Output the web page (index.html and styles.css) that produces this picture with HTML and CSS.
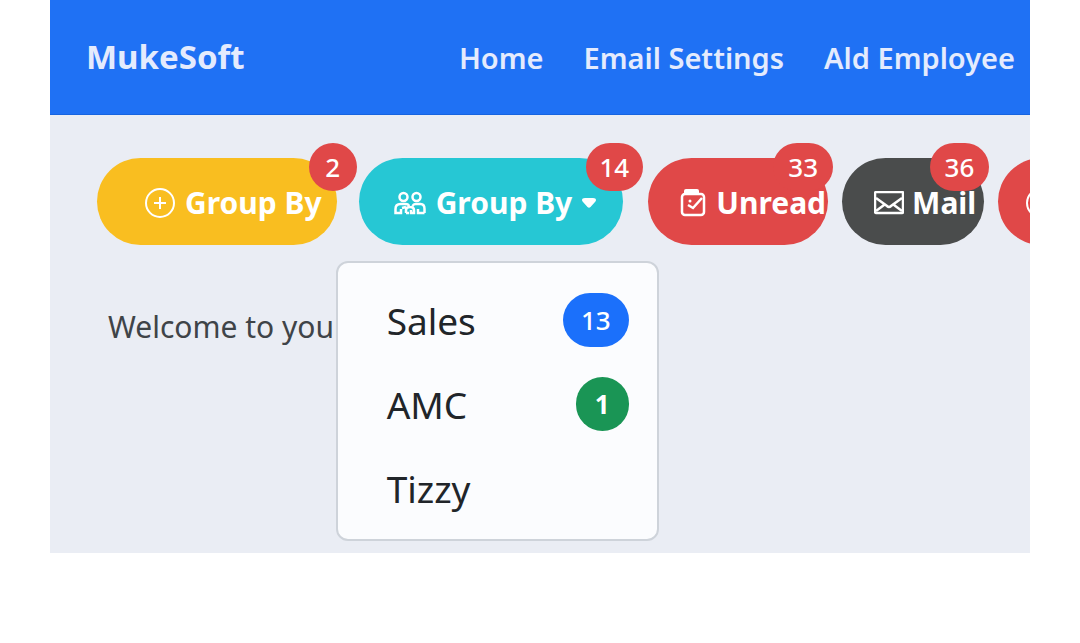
FILE: index.html
```html
<!DOCTYPE html>
<html lang="en">
<head>
    <meta charset="utf-8">
    <meta name="viewport" content="width=device-width, initial-scale=1">
    <title>MukeSoft</title>
    <link rel="stylesheet" href="styles.css">
</head>
<body>
    <div class="page">
        <header class="navbar">
            <a class="brand" href="#">MukeSoft</a>
            <nav class="nav-links">
                <a href="#">Home</a>
                <a href="#">Email Settings</a>
                <a href="#">Ald Employee</a>
            </nav>
        </header>

        <main class="content">
            <div class="toolbar">
                <div class="btn-set">
                    <button type="button" class="btn btn-warning">
                        <svg class="icon" width="30" height="30" viewBox="0 0 30 30">
                            <circle cx="15" cy="15" r="14"/>
                            <path d="M15 9v12M9 15h12"/>
                        </svg>
                        Group By
                        <span class="count">2</span>
                    </button>

                    <div class="dropdown">
                        <button type="button" class="btn btn-info" aria-haspopup="true" aria-expanded="true">
                            <svg class="icon icon-bold" width="32" height="24" viewBox="0 0 32 24">
                                <circle cx="9.500" cy="6" r="4"/>
                                <circle cx="22.500" cy="6" r="4"/>
                                <path d="M7 22H1.500v-4q0-5 5-5h5q3 0 3.500 2M2 22h5v-4M12 22v-3q0-3 4-3t4 3v3h-3v-3M8 17l4-1M12 22h3M30.500 22v-4q0-5-4-5h-5q-2 0-3 2M30.500 22H24v-4"/>
                            </svg>
                            Group By
                            <svg class="caret" width="14" height="10" viewBox="0 0 14 10">
                                <path d="M3 0h8q3 0 3 2 0 1-1 2L8.500 9q-1.500 1.500-3 0L1 4Q0 3 0 2 0 0 3 0z"/>
                            </svg>
                            <span class="count">14</span>
                        </button>
                        <!-- dropdown list -->
                        <ul class="menu">
                            <li><a href="#">Sales <span class="pill pill-blue">13</span></a></li>
                            <li><a href="#">AMC <span class="pill pill-green">1</span></a></li>
                            <li><a href="#">Tizzy</a></li>
                        </ul>
                    </div>
                </div>

                <div class="btn-set btn-set-tight">
                    <button type="button" class="btn btn-danger">
                        <svg class="icon icon-bold" width="26" height="28" viewBox="0 0 26 28">
                            <rect x="2" y="5" width="22" height="21" rx="3"/>
                            <path class="solid" d="M6 0h11q2 0 2 2v4H4V2q0-2 2-2z"/>
                            <path d="M8 16l5 3 9-10"/>
                            <circle class="solid" cx="10" cy="12" r="1.500"/>
                        </svg>
                        Unread
                        <span class="count">33</span>
                    </button>
                    <button type="button" class="btn btn-dark">
                        <svg class="icon icon-bold" width="30" height="24" viewBox="0 0 30 24">
                            <rect x="1" y="1" width="28" height="21" rx="1"/>
                            <path d="M2 7l11 8q2 2 4 0L28 7M2 20l8-6M28 20l-8-6"/>
                        </svg>
                        Mail
                        <span class="count">36</span>
                    </button>
                    <button type="button" class="btn btn-danger btn-more" aria-label="More">
                        <svg class="icon" width="30" height="30" viewBox="0 0 30 30">
                            <circle cx="15" cy="15" r="14"/>
                            <path d="M15 9v12M9 15h12"/>
                        </svg>
                    </button>
                </div>
            </div>

            <p class="welcome">Welcome to your</p>
        </main>
    </div>
</body>
</html>
```

FILE: styles.css
```css
* {
	box-sizing: border-box;
}
body {
	margin: 0;
	background: #fff;
	font-family: "Noto Sans", "Open Sans", sans-serif;
}
a {
	color: inherit;
	text-decoration: none;
}
.page {
	margin: 0 50px;
	overflow: hidden;
	background: #eaedf4;
}

/* top bar */
.navbar {
	display: flex;
	align-items: baseline;
	justify-content: space-between;
	padding: 32px 15px 31px 36px;
	border-bottom: 1px solid #1764e0;
	background: #1f71f4;
	color: #e4ebfd;
	font-weight: 600;
	white-space: nowrap;
}
.brand {
	font-size: 33px;
	line-height: 50px;
	font-weight: 700;
}
.nav-links {
	display: flex;
	gap: 40px;
	font-size: 29px;
	line-height: 50px;
}

/* buttons */
.content {
	padding: 43px 0 205px 47px;
}
.toolbar {
	display: flex;
	gap: 25px;
}
.btn-set {
	display: flex;
	gap: 22px;
}
.btn-set-tight {
	gap: 14px;
}
.btn {
	position: relative;
	display: flex;
	flex-shrink: 0;
	align-items: center;
	gap: 10px;
	padding: 23px 15px 21px 48px;
	border: 0;
	border-radius: 44px;
	color: #fff;
	font-family: inherit;
	font-size: 30px;
	line-height: 43px;
	font-weight: 700;
	white-space: nowrap;
	cursor: pointer;
}
.btn-warning {
	background: #f9be20;
}
.btn-info {
	padding-left: 35px;
	padding-right: 27px;
	background: #26c7d4;
}
.btn-danger {
	padding-left: 32px;
	padding-right: 2px;
	background: #e04848;
}
.btn-dark {
	gap: 8px;
	padding-left: 32px;
	padding-right: 8px;
	background: #4a4c4c;
}
.btn-more {
	padding-left: 28px;
	padding-right: 48px;
}
.icon {
	flex-shrink: 0;
	fill: none;
	stroke: #fff;
	stroke-width: 2;
}
.icon-bold {
	stroke-width: 2.500;
}
.icon .solid,
.caret {
	fill: #fff;
	stroke: none;
}
.count {
	position: absolute;
	top: -15px;
	right: -20px;
	min-width: 48px;
	padding: 0 14px;
	border-radius: 24px;
	background: #e04848;
	font-size: 26px;
	line-height: 48px;
	font-weight: 500;
	text-align: center;
}
.btn-set-tight .count {
	right: -5px;
	padding: 0 15px;
}

/* open menu */
.dropdown {
	position: relative;
}
.menu {
	position: absolute;
	top: 103px;
	left: -23px;
	z-index: 2;
	width: 323px;
	margin: 0;
	padding: 15px 28px 9px 49px;
	border: 2px solid #ced3da;
	border-radius: 12px;
	background: #fbfcfe;
	list-style: none;
}
.menu a {
	display: flex;
	align-items: center;
	justify-content: space-between;
	height: 84px;
	color: #212529;
	font-size: 37px;
}
.pill {
	min-width: 53px;
	padding: 0 18px;
	border-radius: 28px;
	color: #fff;
	font-size: 26px;
	line-height: 54px;
	font-weight: 500;
	text-align: center;
}
.pill-blue {
	background: #1b70fb;
}
.pill-green {
	background: #1a9555;
	font-weight: 700;
}
.welcome {
	margin: 61px 0 0 11px;
	color: #3f4448;
	font-size: 30px;
	line-height: 42px;
}
```
